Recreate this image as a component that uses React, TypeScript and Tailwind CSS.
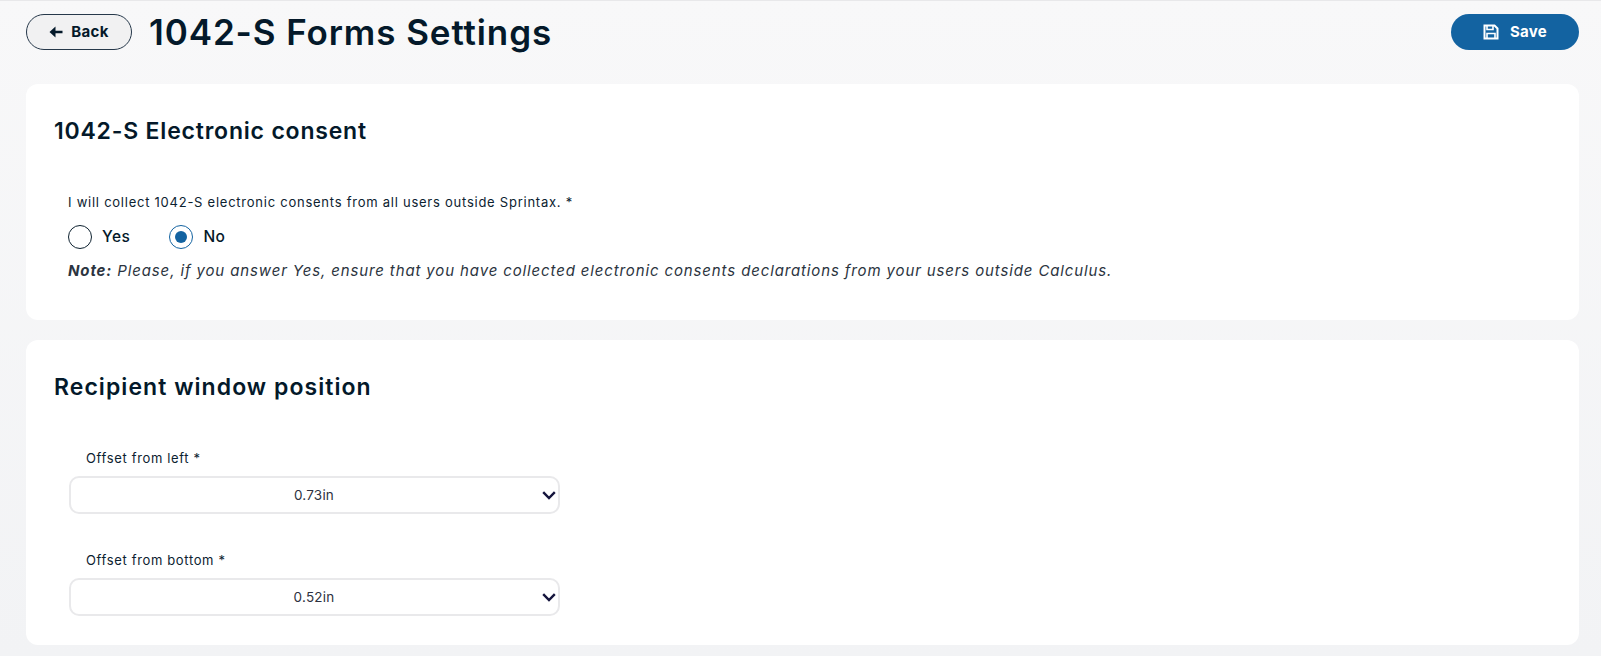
import React from "react";

function Radio({ label, checked }: { label: string; checked?: boolean }) {
  return (
    <label className="flex items-center gap-[10px]">
      <span
        className={
          "flex h-6 w-6 items-center justify-center rounded-full border bg-white " +
          (checked ? "border-[#1363a1]" : "border-[#0e2230]")
        }
      >
        {checked && <span className="h-3 w-3 rounded-full bg-[#1363a1]" />}
      </span>
      <span className="text-[15.5px] font-medium tracking-[0.5px] text-[#04192a]">{label}</span>
    </label>
  );
}

function SelectField({ label, value }: { label: string; value: string }) {
  return (
    <div className="ml-[15px] w-[491px]">
      <div className="ml-[17px] h-[20px] text-[13px] leading-[20px] tracking-[0.65px] text-[#0c2230]">{label}</div>
      <div className="mt-[8px] flex h-[38px] items-center rounded-[10px] border-2 border-[#e9e9eb] bg-white pr-[1px]">
        <span className="flex-1 pl-[16px] text-center text-[13.5px] tracking-[0.2px] text-[#2d3140]">{value}</span>
        <svg width="16" height="16" viewBox="0 0 16 16" fill="none">
          <path d="M2.2 5.2 8 11l5.8-5.8" stroke="#14143c" strokeWidth="2.4" />
        </svg>
      </div>
    </div>
  );
}

export default function App() {
  return (
    <div
      className="flex h-[656px] flex-col overflow-hidden border-t border-[#e8e8ea] bg-linear-to-b from-[#f8f8f9] to-[#f2f3f5] pr-[22px] pl-[26px] text-[#04192a]"
      style={{ fontFamily: '"Inter", "Liberation Sans", sans-serif' }}
    >
      <header className="flex h-[83px] shrink-0 items-start pt-[13px]">
        <button className="flex h-[36px] w-[106px] items-center justify-center gap-[7px] rounded-full border border-[#26384a] bg-[#f1f1f2] text-[15px] font-bold tracking-[0.3px]">
          <svg width="15" height="14" viewBox="0 0 15 14" fill="#04192a">
            <path d="M0.5 7 6.5 1.5V5.8H13.5V8.2H6.5V12.5Z" />
          </svg>
          Back
        </button>
        <h1 className="ml-[17px] text-[35px] leading-[36px] font-semibold tracking-[0.9px]">1042-S Forms Settings</h1>
        <button className="ml-auto flex h-[36px] w-[128px] items-center justify-center gap-[11px] rounded-full bg-[#1363a1] text-[15px] font-bold tracking-[0.3px] text-white">
          <svg width="16" height="16" viewBox="0 0 16 16" fill="none" stroke="white" strokeWidth="2">
            <path d="M1.5 1.5H11.5L14.5 4.5V14.5H1.5Z" />
            <path d="M4 2V5.5H10V2" strokeWidth="1.6" />
            <path d="M4 14V9.5H12V14" strokeWidth="1.6" />
          </svg>
          Save
        </button>
      </header>

      <section className="h-[236px] shrink-0 rounded-[12px] bg-white px-[28px] pt-[33px]">
        <h2 className="text-[23px] leading-[28px] font-semibold tracking-[0.8px]">1042-S Electronic consent</h2>
        <p className="mt-[47px] ml-[14px] text-[13px] leading-[20px] tracking-[0.75px] text-[#0c2230]">
          I will collect 1042-S electronic consents from all users outside Sprintax. *
        </p>
        <div className="mt-[13px] ml-[14px] flex gap-[39px]">
          <Radio label="Yes" />
          <Radio label="No" checked />
        </div>
        <p className="mt-[12px] ml-[14px] text-[15px] leading-[20px] tracking-[0.87px] text-[#2b3440] italic">
          <strong className="font-bold">Note:</strong> Please, if you answer Yes, ensure that you have collected
          electronic consents declarations from your users outside Calculus.
        </p>
      </section>

      <section className="mt-[20px] h-[305px] shrink-0 rounded-[12px] bg-white px-[28px] pt-[33px]">
        <h2 className="text-[23px] leading-[28px] font-semibold tracking-[1.05px]">Recipient window position</h2>
        <div className="mt-[47px]">
          <SelectField label="Offset from left *" value="0.73in" />
        </div>
        <div className="mt-[36px]">
          <SelectField label="Offset from bottom *" value="0.52in" />
        </div>
      </section>
    </div>
  );
}
